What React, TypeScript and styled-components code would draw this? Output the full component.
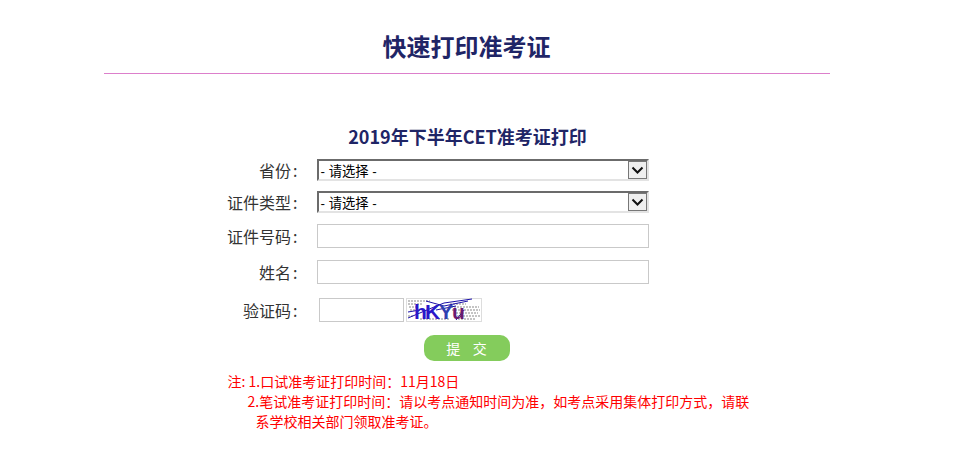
import styled, { createGlobalStyle } from "styled-components";

const GlobalStyle = createGlobalStyle`
  html, body {
    margin: 0;
    padding: 0;
    background: #fff;
  }
  body {
    font-family: "Noto Sans CJK SC", "Liberation Sans", sans-serif;
  }
`;

const Page = styled.div`
  width: 955px;
  height: 475px;
  overflow: hidden;
  display: flex;
  flex-direction: column;
  align-items: center;
`;

const Header = styled.div`
  width: 726px;
  margin-right: 22px;
  height: 74px;
  box-sizing: border-box;
  border-bottom: 1px solid #dc7fcb;
  text-align: center;
  padding-top: 29px;
`;

const MainTitle = styled.h1`
  margin: 0;
  font-size: 24px;
  line-height: 34px;
  font-weight: 700;
  color: #1f2566;
`;

const Content = styled.div`
  width: 726px;
  margin-right: 22px;
  padding-top: 49px;
  display: flex;
  flex-direction: column;
`;

const SubTitle = styled.h2`
  margin: 0 0 5px 244px;
  width: 240px;
  text-align: center;
  font-size: 18px;
  line-height: 26px;
  font-weight: 700;
  color: #1f2566;
  white-space: nowrap;
`;

const Row = styled.div<{ $height: number }>`
  display: flex;
  align-items: center;
  height: ${(p) => p.$height}px;
`;

const Label = styled.label`
  width: 194px;
  text-align: right;
  font-size: 16px;
  color: #333;
  flex: none;
  white-space: nowrap;
`;

const Colon = styled.span`
  margin-left: 2px;
`;

const FakeSelect = styled.div`
  margin-left: 19px;
  width: 332px;
  height: 22px;
  box-sizing: border-box;
  border-style: solid;
  border-width: 2px;
  border-color: #6b6b6b #e3e3e3 #e3e3e3 #6b6b6b;
  background: #fff;
  display: flex;
  align-items: center;
  justify-content: space-between;
  font-family: "Liberation Sans", "Noto Sans CJK SC", sans-serif;
  font-size: 13.33px;
  color: #000;
  padding-left: 2px;
`;

const SelectArrow = styled.span`
  width: 19px;
  height: 18px;
  box-sizing: border-box;
  border: 1px solid #777;
  background: #efefef;
  display: flex;
  align-items: center;
  justify-content: center;
`;

const TextInput = styled.input`
  margin-left: 19px;
  width: 332px;
  height: 24px;
  box-sizing: border-box;
  border: 1px solid #c9c9c9;
  padding: 0 4px;
  background: #fff;
  outline: none;
`;

const CodeInput = styled(TextInput)`
  margin-left: 21px;
  width: 85px;
`;

const Captcha = styled.svg`
  margin-left: 2px;
  display: block;
`;

const ButtonRow = styled.div`
  display: flex;
  padding-left: 320px;
  margin-top: 5px;
`;

const Submit = styled.button`
  width: 86px;
  height: 26px;
  border: none;
  padding: 0;
  border-radius: 10px;
  background: #84cc5c;
  color: #fff;
  font-family: inherit;
  font-size: 14px;
  white-space: pre;
`;

const Notes = styled.div`
  margin-top: 10px;
  margin-left: 124px;
  width: 530px;
  color: #f00;
  font-size: 14px;
  line-height: 20px;
`;

const NoteLine = styled.div<{ $indent: number }>`
  padding-left: ${(p) => p.$indent}px;
  white-space: nowrap;
`;

function Chevron() {
  return (
    <svg width="13" height="9" viewBox="0 0 13 9">
      <path d="M1.5 1.5 L6.5 6.5 L11.5 1.5" fill="none" stroke="#111" strokeWidth="2" />
    </svg>
  );
}

function Select() {
  return (
    <FakeSelect>
      <span>- 请选择 -</span>
      <SelectArrow>
        <Chevron />
      </SelectArrow>
    </FakeSelect>
  );
}

function CaptchaImage() {
  return (
    <Captcha width="76" height="24" viewBox="0 0 76 24">
      <rect x="0.5" y="0.5" width="75" height="23" fill="#fff" stroke="#bbb" strokeDasharray="1 1" />
      <path
        d="M2 3 H24 M2 6 H16 M3 9 H12 M4 12 H10 M44 6 H60 M42 9 H73 M46 12 H74 M50 15 H72 M48 18 H74 M52 21 H70 M2 18 H8 M14 21 H44"
        stroke="#c4c4c4"
        strokeWidth="2"
        strokeDasharray="2 1"
        fill="none"
      />
      <path d="M2 20 L28 9 L38 5 L66 1" stroke="#1a10a8" strokeWidth="1" fill="none" />
      <path d="M20 3 L38 8 L62 3 M30 12 L50 8 M2 14 L14 12 M58 12 L50 22" stroke="#1a10a8" strokeWidth="1" fill="none" />
      <g fontFamily="Liberation Sans, sans-serif" fontWeight="700" fontSize="21">
        <text x="8" y="21" fill="#2a18c8">h</text>
        <text x="19" y="21" fill="#2a18c8">K</text>
        <text x="33" y="21" fill="#3040b0">Y</text>
        <text x="46" y="21" fill="#6a1a70">u</text>
      </g>
    </Captcha>
  );
}

function FieldLabel({ text }: { text: string }) {
  return (
    <Label>
      {text}
      <Colon>:</Colon>
    </Label>
  );
}

export default function App() {
  return (
    <Page>
      <GlobalStyle />
      <Header>
        <MainTitle>快速打印准考证</MainTitle>
      </Header>
      <Content>
        <SubTitle>2019年下半年CET准考证打印</SubTitle>
        <Row $height={32}>
          <FieldLabel text="省份" />
          <Select />
        </Row>
        <Row $height={32}>
          <FieldLabel text="证件类型" />
          <Select />
        </Row>
        <Row $height={36}>
          <FieldLabel text="证件号码" />
          <TextInput />
        </Row>
        <Row $height={36}>
          <FieldLabel text="姓名" />
          <TextInput />
        </Row>
        <Row $height={40}>
          <FieldLabel text="验证码" />
          <CodeInput />
          <CaptchaImage />
        </Row>
        <ButtonRow>
          <Submit>{"提    交"}</Submit>
        </ButtonRow>
        <Notes>
          <NoteLine $indent={0}>注: 1.口试准考证打印时间：11月18日</NoteLine>
          <NoteLine $indent={20}>2.笔试准考证打印时间：请以考点通知时间为准，如考点采用集体打印方式，请联</NoteLine>
          <NoteLine $indent={28}>系学校相关部门领取准考证。</NoteLine>
        </Notes>
      </Content>
    </Page>
  );
}
